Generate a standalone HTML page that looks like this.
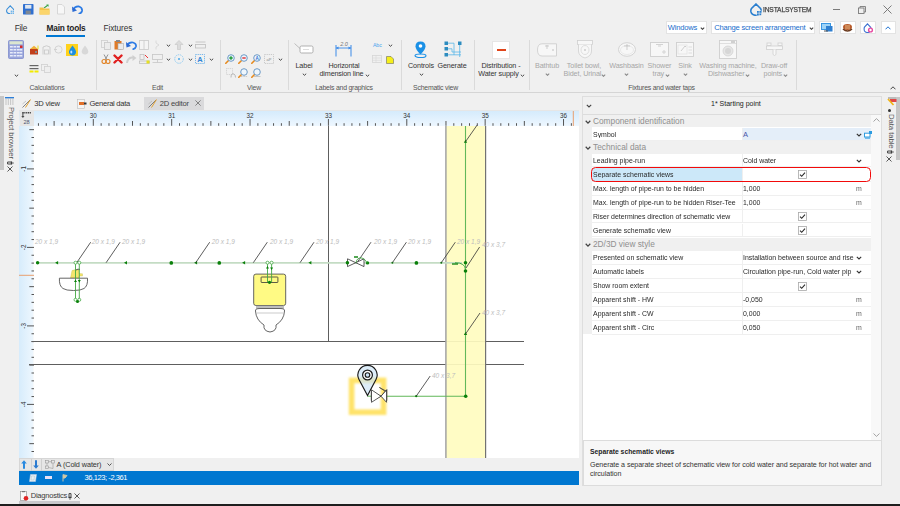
<!DOCTYPE html>
<html><head><meta charset="utf-8">
<style>
*{margin:0;padding:0;box-sizing:border-box}
html,body{width:900px;height:506px;overflow:hidden;background:#f0f0f0;font-family:"Liberation Sans",sans-serif;color:#222}
.a{position:absolute}
.t{position:absolute;white-space:nowrap;line-height:1;font-family:"Liberation Sans",sans-serif}
.grp{position:absolute;font-size:6.3px;color:#444;white-space:nowrap;line-height:1}
.sep{position:absolute;width:1px;background:#d9d9d9;top:40px;height:50px}
.dis{color:#a3a3a3}
</style></head><body>

<!-- ===== Title bar / QAT ===== -->
<div class="a" style="left:0;top:0;width:900px;height:92px;background:#f0f0f0"></div>

<!-- tabs -->
<div class="t" style="left:14.8px;top:24.1px;font-size:8.3px;color:#333;letter-spacing:-0.3px">File</div>
<div class="t" style="left:46.5px;top:24.1px;font-size:8.3px;font-weight:bold;color:#222;letter-spacing:-0.2px">Main tools</div>
<div class="a" style="left:46px;top:35px;width:39px;height:1.6px;background:#0078d4"></div>
<div class="t" style="left:103.5px;top:24.1px;font-size:8.3px;color:#333;letter-spacing:-0.1px">Fixtures</div>


<!-- QAT icons -->
<svg class="a" style="left:5.5px;top:4.8px" width="8.5" height="9.5" viewBox="0 0 10 11"><path d="M5 0.8 L8.6 4.6 Q9.5 6 9.3 7.6 Q8.5 10.2 5 10.2 Q1.5 10.2 0.8 7.6 Q0.5 6 1.4 4.6 Z" fill="none" stroke="#3b8fd9" stroke-width="1.3"/><rect x="5" y="6" width="5" height="5" fill="#f0f0f0"/><rect x="5.5" y="6.5" width="1.8" height="1.8" fill="#6fb4ea"/><rect x="7.8" y="6.5" width="1.8" height="1.8" fill="#6fb4ea"/><rect x="5.5" y="8.8" width="1.8" height="1.8" fill="#6fb4ea"/><rect x="7.8" y="8.8" width="1.8" height="1.8" fill="#6fb4ea"/></svg>
<svg class="a" style="left:23px;top:4px" width="10.5" height="10.5" viewBox="0 0 10 10"><rect x="0" y="0" width="10" height="10" rx="0.8" fill="#2f6fd0"/><rect x="2" y="0.8" width="6" height="3.6" fill="#dfe6ef"/><rect x="2.5" y="6.2" width="5" height="3.4" fill="#7d8794"/></svg>
<svg class="a" style="left:39px;top:3.5px" width="11" height="11" viewBox="0 0 11 11"><path d="M0.5 3.5 L4 3.5 L5 4.5 L10.5 4.5 L10.5 10.5 L0.5 10.5 Z" fill="#f3c24a"/><path d="M1 6 L10.5 6 L10.5 10.5 L0.5 10.5 Z" fill="#fbd56c"/><path d="M4.5 3.8 L8 1 L7 0.5 L9.6 0.4 L9.5 3 L8.8 2 L5.6 4.3 Z" fill="#3aa546"/></svg>
<svg class="a" style="left:56.5px;top:4px" width="8" height="10.5" viewBox="0 0 8 10.5"><path d="M0.5 0.5 L5 0.5 L7.5 3 L7.5 10 L0.5 10 Z" fill="#f7f7f7" stroke="#d4d4d4" stroke-width="0.9"/></svg>
<svg class="a" style="left:72px;top:4.5px" width="11" height="9.5" viewBox="0 0 11 9.5"><path d="M1 5 Q3 1 7 1.5 Q10.5 2.5 10 6 Q9.3 8.5 6.5 8.8" fill="none" stroke="#2c7be5" stroke-width="1.8"/><path d="M0 1.5 L0.5 7 L5 5.5 Z" fill="#2c6ad2"/></svg>

<!-- logo -->
<svg class="a" style="left:750px;top:3px" width="12" height="13" viewBox="0 0 12 13"><path d="M6 1 L10.5 5.5 Q11.5 7 11 9 Q10 12.3 6 12.3 Q2 12.3 1 9 Q0.5 7 1.5 5.5 Z" fill="none" stroke="#2a7fcf" stroke-width="1.6"/><rect x="6.5" y="7.5" width="5" height="5" fill="#f0f0f0"/><rect x="7" y="8" width="1.8" height="1.8" fill="#2a7fcf"/><rect x="9.4" y="8" width="1.8" height="1.8" fill="#2a7fcf"/><rect x="7" y="10.4" width="1.8" height="1.8" fill="#2a7fcf"/><rect x="9.4" y="10.4" width="1.8" height="1.8" fill="#2a7fcf"/></svg>
<div class="t" style="left:763.3px;top:5.9px;font-size:7.2px;color:#444;letter-spacing:-0.15px;-webkit-text-stroke:0.25px #444;transform:scaleX(0.925);transform-origin:0 0">INSTALSYSTEM</div>
<!-- window controls -->
<div class="a" style="left:833px;top:9px;width:7px;height:1px;background:#7a7a7a"></div>
<svg class="a" style="left:858px;top:6px" width="8" height="8" viewBox="0 0 8 8"><rect x="0.5" y="2" width="5.5" height="5.5" fill="none" stroke="#7a7a7a" stroke-width="0.9"/><path d="M2 2 L2 0.5 L7.5 0.5 L7.5 6 L6 6" fill="none" stroke="#7a7a7a" stroke-width="0.9"/></svg>
<svg class="a" style="left:883px;top:5px" width="9" height="9" viewBox="0 0 9 9"><path d="M0.5 0.5 L8.5 8.5 M8.5 0.5 L0.5 8.5" stroke="#6e6e6e" stroke-width="0.9"/></svg>

<!-- Windows / change screen -->
<div class="a" style="left:665.5px;top:21px;width:41.5px;height:13px;background:#fff;border:1px solid #e3e3e3"></div>
<div class="t" style="left:667.8px;top:24px;font-size:7.6px;color:#1a6dcc;letter-spacing:-0.2px">Windows</div>
<svg class="a" style="left:700px;top:26.8px" width="5" height="3" viewBox="0 0 5 3"><path d="M0.8 0.6 L2.5 2.3 L4.2 0.6" fill="none" stroke="#444" stroke-width="1.1"/></svg>
<div class="a" style="left:711px;top:21px;width:104px;height:13px;background:#fff;border:1px solid #e3e3e3"></div>
<div class="t" style="left:714.3px;top:24px;font-size:7.6px;color:#1a6dcc;letter-spacing:-0.22px">Change screen arrangement</div>
<svg class="a" style="left:808.5px;top:26.8px" width="5" height="3" viewBox="0 0 5 3"><path d="M0.8 0.6 L2.5 2.3 L4.2 0.6" fill="none" stroke="#444" stroke-width="1.1"/></svg>
<!-- icon buttons -->
<div class="a" style="left:819px;top:21px;width:16px;height:13px;background:#fff;border:1px solid #e3e3e3"></div>
<svg class="a" style="left:821px;top:23px" width="12" height="9" viewBox="0 0 12 9"><rect x="0.5" y="0.5" width="9" height="6" fill="#9fd4f7" stroke="#2b8fe0" stroke-width="0.9"/><rect x="5" y="3" width="6.5" height="5.5" fill="#2f7fd0"/><rect x="3" y="7.5" width="4" height="1" fill="#555"/></svg>
<div class="a" style="left:839.5px;top:21px;width:16px;height:13px;background:#fff;border:1px solid #e3e3e3"></div>
<svg class="a" style="left:842px;top:22.5px" width="11" height="10" viewBox="0 0 11 10"><ellipse cx="5.5" cy="4" rx="4.5" ry="3" fill="#b85a2a"/><path d="M1 6 Q5.5 10 10 6" fill="none" stroke="#6b3a1e" stroke-width="1.6"/><path d="M3 3 L8 3 M3 5 L8 5" stroke="#f3d2a0" stroke-width="0.8"/></svg>
<div class="a" style="left:860px;top:21px;width:15.5px;height:13px;background:#fff;border:1px solid #e3e3e3"></div>
<svg class="a" style="left:862.5px;top:22.5px" width="11" height="10" viewBox="0 0 11 10"><path d="M4.5 0.8 L7.5 4 Q8.5 6 7.5 8 Q6.5 9.5 4.5 9.5 Q2.5 9.5 1.5 8 Q0.7 6 1.5 4 Z" fill="none" stroke="#3b6fd0" stroke-width="1.1"/><circle cx="7.5" cy="7" r="2.6" fill="#e64aa0"/><circle cx="7.5" cy="7" r="1.2" fill="#fff"/></svg>
<div class="a" style="left:880.5px;top:21px;width:15px;height:13px;background:#fff;border:1px solid #e3e3e3"></div>
<svg class="a" style="left:885px;top:25.5px" width="6" height="4" viewBox="0 0 6 4"><path d="M0.5 3.3 L3 0.8 L5.5 3.3" fill="none" stroke="#1a6fd0" stroke-width="1"/></svg>

<!-- RIBBON START -->
<div class="t" style="left:-13px;width:120px;text-align:center;top:84.5px;font-size:6.9px;color:#555;letter-spacing:-0.22px">Calculations</div>
<div class="t" style="left:97.5px;width:120px;text-align:center;top:84.5px;font-size:6.9px;color:#555;letter-spacing:-0.22px">Edit</div>
<div class="t" style="left:194px;width:120px;text-align:center;top:84.5px;font-size:6.9px;color:#555;letter-spacing:-0.22px">View</div>
<div class="t" style="left:284px;width:120px;text-align:center;top:84.5px;font-size:6.9px;color:#555;letter-spacing:-0.22px">Labels and graphics</div>
<div class="t" style="left:375.5px;width:120px;text-align:center;top:84.5px;font-size:6.9px;color:#555;letter-spacing:-0.22px">Schematic view</div>
<div class="t" style="left:601.5px;width:120px;text-align:center;top:84.5px;font-size:6.9px;color:#555;letter-spacing:-0.22px">Fixtures and water taps</div>
<div class="a" style="left:95.5px;top:40px;width:1px;height:50px;background:#dadada"></div>
<div class="a" style="left:219.5px;top:40px;width:1px;height:50px;background:#dadada"></div>
<div class="a" style="left:288px;top:40px;width:1px;height:50px;background:#dadada"></div>
<div class="a" style="left:400.5px;top:40px;width:1px;height:50px;background:#dadada"></div>
<div class="a" style="left:473.5px;top:40px;width:1px;height:50px;background:#dadada"></div>
<div class="a" style="left:528.5px;top:40px;width:1px;height:50px;background:#dadada"></div>
<div class="a" style="left:795.5px;top:40px;width:1px;height:50px;background:#dadada"></div>
<svg class="a" style="left:890px;top:86px" width="6" height="4" viewBox="0 0 6 4"><path d="M0.5 3.3 L3 0.8 L5.5 3.3" fill="none" stroke="#444" stroke-width="1"/></svg>
<svg class="a" style="left:8px;top:40px" width="16" height="19" viewBox="0 0 16 19"><rect x="0.5" y="0.5" width="15" height="18" rx="1" fill="#9aa6dc" stroke="#7d8acb" stroke-width="0.8"/><rect x="1.5" y="1.3" width="13" height="3" fill="#dbe6cf"/><g fill="#e8ecfa"><rect x="2" y="6" width="2.8" height="1.5"/><rect x="5.5" y="6" width="2.8" height="1.5"/><rect x="2" y="9" width="2.8" height="1.5"/><rect x="5.5" y="9" width="2.8" height="1.5"/><rect x="9" y="9" width="2.8" height="1.5"/><rect x="12" y="9" width="2.3" height="1.5"/><rect x="2" y="12" width="2.8" height="1.5"/><rect x="5.5" y="12" width="2.8" height="1.5"/><rect x="9" y="12" width="2.8" height="1.5"/><rect x="12" y="12" width="2.3" height="1.5"/><rect x="2" y="15" width="2.8" height="1.5"/><rect x="5.5" y="15" width="2.8" height="1.5"/><rect x="9" y="15" width="2.8" height="1.5"/><rect x="12" y="15" width="2.3" height="1.5"/><rect x="9" y="6" width="2.8" height="1.5"/></g><rect x="12" y="5.5" width="2.5" height="2.5" fill="#d42a2a"/></svg>
<svg class="a" style="left:14px;top:73.5px" width="5" height="3" viewBox="0 0 5 3"><path d="M0.8 0.7 L2.5 2.3 L4.2 0.7" fill="none" stroke="#444" stroke-width="1"/></svg>
<svg class="a" style="left:29px;top:45px" width="10" height="10" viewBox="0 0 10 10"><path d="M1 4 L5 0.8 L9 4 Z" fill="#f0b23a"/><rect x="1" y="4" width="8" height="5.5" fill="#c2401c"/><rect x="6" y="6" width="2" height="2" fill="#888"/><rect x="8.5" y="0.5" width="1" height="4" fill="#e6e020"/></svg>
<svg class="a" style="left:42px;top:45px" width="9" height="10" viewBox="0 0 9 10"><path d="M1 9.5 L1 2 Q4.5 -0.5 8 2 L8 9.5" fill="none" stroke="#c8c8c8" stroke-width="0.9"/><rect x="2.5" y="5" width="4" height="4" fill="none" stroke="#c8c8c8" stroke-width="0.8"/></svg>
<svg class="a" style="left:54px;top:45px" width="9" height="9" viewBox="0 0 9 9"><circle cx="4.5" cy="4.5" r="3.6" fill="none" stroke="#cfcfcf" stroke-width="0.9"/><path d="M0 4.5 L3 4.5" stroke="#cfcfcf" stroke-width="0.9"/></svg>
<div class="a" style="left:66px;top:43.5px;width:12px;height:12.5px;background:#ffd21c"></div><svg class="a" style="left:67.5px;top:44.5px" width="9" height="11" viewBox="0 0 9 11"><path d="M4.5 0.5 Q8.5 5.5 8 7.5 Q7.5 10.5 4.5 10.5 Q1.5 10.5 1 7.5 Q0.5 5.5 4.5 0.5 Z" fill="#1e8fe0"/><ellipse cx="3.3" cy="7" rx="1" ry="1.6" fill="#bfe3ff"/></svg>
<svg class="a" style="left:81px;top:45px" width="8" height="10" viewBox="0 0 8 10"><path d="M4 0.5 Q7.5 5 7.3 6.8 Q7 9.5 4 9.5 Q1 9.5 0.7 6.8 Q0.5 5 4 0.5 Z" fill="#d8d8d8"/></svg>
<svg class="a" style="left:29px;top:64px" width="10" height="9" viewBox="0 0 10 9"><rect x="0.5" y="1" width="9" height="1.2" fill="#666"/><rect x="0.5" y="4" width="9" height="1.2" fill="#666"/><rect x="0.5" y="6.5" width="4" height="2" fill="#f2ea00"/><rect x="5.5" y="6.5" width="4" height="2" fill="#f2ea00"/></svg>
<svg class="a" style="left:41px;top:64px" width="10" height="9" viewBox="0 0 10 9"><rect x="0.5" y="0.5" width="6" height="6" fill="none" stroke="#d0d0d0" stroke-width="0.8"/><rect x="3.5" y="2.5" width="6" height="6" fill="#eee" stroke="#d0d0d0" stroke-width="0.8"/></svg>
<svg class="a" style="left:101px;top:40px" width="10" height="10" viewBox="0 0 10 10"><rect x="0.5" y="0.5" width="6" height="7" fill="none" stroke="#cfcfcf" stroke-width="0.8"/><rect x="3.5" y="2.5" width="6" height="7" fill="#ececec" stroke="#c8c8c8" stroke-width="0.8"/></svg>
<svg class="a" style="left:114px;top:40px" width="10" height="10" viewBox="0 0 10 10"><rect x="0.5" y="1" width="7" height="8.5" fill="#e07b28"/><rect x="2" y="0" width="4" height="2" fill="#888"/><rect x="4" y="3.5" width="5.5" height="6" fill="#ececec" stroke="#aaa" stroke-width="0.6"/></svg>
<svg class="a" style="left:126px;top:40.5px" width="11" height="9" viewBox="0 0 11 9"><path d="M1 4.5 Q3 1 7 1.5 Q10.5 2.5 10 5.5 Q9.3 8 6.5 8.3" fill="none" stroke="#2c7be5" stroke-width="1.7"/><path d="M0 1 L0.5 6.5 L5 5 Z" fill="#2c6ad2"/></svg>
<svg class="a" style="left:139px;top:40px" width="10" height="10" viewBox="0 0 10 10"><rect x="0.5" y="0.5" width="9" height="9" fill="#f4f4f4" stroke="#c9c9c9" stroke-width="0.8"/><path d="M5 0.5 L5 9.5" stroke="#c9c9c9" stroke-width="0.8"/></svg>
<svg class="a" style="left:155px;top:40px" width="5" height="10" viewBox="0 0 5 10"><path d="M1 0.5 L1 3 L4 5 L1 7 L1 9.5" fill="none" stroke="#d4d4d4" stroke-width="0.8"/></svg>
<svg class="a" style="left:165.5px;top:44.3px" width="5" height="3" viewBox="0 0 5 3"><path d="M0.8 0.7 L2.5 2.3 L4.2 0.7" fill="none" stroke="#444" stroke-width="1"/></svg>
<svg class="a" style="left:174px;top:40px" width="10" height="10" viewBox="0 0 10 10"><path d="M5 0.5 L9 4.5 L6.5 4.5 L6.5 9.5 L3.5 9.5 L3.5 4.5 L1 4.5 Z" fill="#dcdcdc" stroke="#c4c4c4" stroke-width="0.6"/></svg>
<svg class="a" style="left:187.5px;top:44.3px" width="5" height="3" viewBox="0 0 5 3"><path d="M0.8 0.7 L2.5 2.3 L4.2 0.7" fill="none" stroke="#444" stroke-width="1"/></svg>
<svg class="a" style="left:195px;top:41px" width="11" height="8" viewBox="0 0 11 8"><path d="M0.5 1 L10.5 1" stroke="#bdbdbd" stroke-width="0.8"/><rect x="0.5" y="3.5" width="10" height="3.5" fill="none" stroke="#bdbdbd" stroke-width="0.8"/></svg>
<svg class="a" style="left:101px;top:54px" width="10" height="10" viewBox="0 0 10 10"><path d="M3 0.5 L6 6 M7 0.5 L4 6" stroke="#888" stroke-width="0.9"/><circle cx="3" cy="7.5" r="2" fill="none" stroke="#e2862a" stroke-width="1.2"/><circle cx="7" cy="7.5" r="2" fill="none" stroke="#e2862a" stroke-width="1.2"/></svg>
<svg class="a" style="left:113px;top:54px" width="10" height="10" viewBox="0 0 10 10"><path d="M1.5 1.5 L8.5 8.5 M8.5 1.5 L1.5 8.5" stroke="#e02020" stroke-width="2.4" stroke-linecap="round"/></svg>
<svg class="a" style="left:126px;top:55px" width="11" height="9" viewBox="0 0 11 9"><path d="M1 8 Q1.5 3 6 2.5 L7 2.5" fill="none" stroke="#cfcfcf" stroke-width="2"/><path d="M6.5 0 L10.5 3 L6.5 6 Z" fill="#cfcfcf"/></svg>
<svg class="a" style="left:139px;top:54px" width="11" height="10" viewBox="0 0 11 10"><rect x="1" y="0.5" width="4" height="5" fill="none" stroke="#bbb" stroke-width="0.7"/><path d="M6 1 L9 4" stroke="#e33" stroke-width="1"/><rect x="0.5" y="7" width="10" height="2.5" fill="none" stroke="#bbb" stroke-width="0.7"/><rect x="7.5" y="6.5" width="3" height="3" fill="#e6e020"/></svg>
<svg class="a" style="left:152px;top:54px" width="11" height="10" viewBox="0 0 11 10"><rect x="0.5" y="0.5" width="10" height="5" fill="none" stroke="#c6c6c6" stroke-width="0.8"/><path d="M5.5 5.5 L5.5 8.5 M0.5 8.5 L10.5 8.5" stroke="#c6c6c6" stroke-width="0.8"/></svg>
<svg class="a" style="left:165.5px;top:57.8px" width="5" height="3" viewBox="0 0 5 3"><path d="M0.8 0.7 L2.5 2.3 L4.2 0.7" fill="none" stroke="#444" stroke-width="1"/></svg>
<svg class="a" style="left:174px;top:54px" width="10" height="10" viewBox="0 0 10 10"><circle cx="5" cy="5" r="4.3" fill="none" stroke="#8ccaf2" stroke-width="0.9" stroke-dasharray="1.5 0.8"/><circle cx="5" cy="5" r="1" fill="#4aa8e8"/></svg>
<svg class="a" style="left:187.5px;top:57.8px" width="5" height="3" viewBox="0 0 5 3"><path d="M0.8 0.7 L2.5 2.3 L4.2 0.7" fill="none" stroke="#444" stroke-width="1"/></svg>
<svg class="a" style="left:195px;top:54px" width="10" height="10" viewBox="0 0 10 10"><rect x="0.5" y="0.5" width="9" height="9" fill="none" stroke="#57a7e8" stroke-width="0.8" stroke-dasharray="1.2 0.9"/><text x="5" y="8" font-size="7.5" font-family="Liberation Sans" font-weight="bold" fill="#2f86d8" text-anchor="middle">A</text></svg>
<svg class="a" style="left:208.5px;top:57.8px" width="5" height="3" viewBox="0 0 5 3"><path d="M0.8 0.7 L2.5 2.3 L4.2 0.7" fill="none" stroke="#444" stroke-width="1"/></svg>
<svg class="a" style="left:225px;top:54px" width="10" height="10" viewBox="0 0 10 10"><path d="M0.8 9.2 L3.3 6.7" stroke="#e68a1e" stroke-width="1.6" stroke-linecap="round"/><circle cx="6" cy="4" r="3.3" fill="#eef6fd" stroke="#5d8fc0" stroke-width="0.9"/><path d="M4.3 4 L7.7 4 M6 2.3 L6 5.7" stroke="#1e9a3a" stroke-width="1.4"/></svg>
<svg class="a" style="left:238px;top:54px" width="10" height="10" viewBox="0 0 10 10"><path d="M0.8 9.2 L3.3 6.7" stroke="#e68a1e" stroke-width="1.6" stroke-linecap="round"/><circle cx="6" cy="4" r="3.3" fill="#eef6fd" stroke="#5d8fc0" stroke-width="0.9"/><path d="M4.3 4 L7.7 4" stroke="#e03030" stroke-width="1.4"/></svg>
<svg class="a" style="left:251px;top:54px" width="10" height="10" viewBox="0 0 10 10"><path d="M0.8 9.2 L3.3 6.7" stroke="#e68a1e" stroke-width="1.6" stroke-linecap="round"/><circle cx="6" cy="4" r="3.3" fill="#eef6fd" stroke="#5d8fc0" stroke-width="0.9"/><text x="6" y="5.6" font-size="4.5" font-family="Liberation Sans" font-weight="bold" fill="#2f6fd0" text-anchor="middle">A</text></svg>
<svg class="a" style="left:264px;top:54px" width="10" height="10" viewBox="0 0 10 10"><rect x="0.5" y="0.5" width="9" height="9" fill="none" stroke="#b8b8b8" stroke-width="0.7" stroke-dasharray="1.2 0.9"/><text x="5" y="6.5" font-size="4" font-family="Liberation Sans" fill="#888" text-anchor="middle">aP</text></svg>
<svg class="a" style="left:277.5px;top:57.8px" width="5" height="3" viewBox="0 0 5 3"><path d="M0.8 0.7 L2.5 2.3 L4.2 0.7" fill="none" stroke="#444" stroke-width="1"/></svg>
<svg class="a" style="left:226px;top:68px" width="10" height="10" viewBox="0 0 10 10"><rect x="0.5" y="0.5" width="6" height="6" fill="none" stroke="#c4c4c4" stroke-width="0.7" stroke-dasharray="1 0.8"/><path d="M5 9.5 Q5 5 8 6 Q9.5 7 9.5 9.5" fill="none" stroke="#aaa" stroke-width="0.8"/></svg>
<svg class="a" style="left:238px;top:68px" width="10" height="10" viewBox="0 0 10 10"><path d="M0.8 9.2 L3.3 6.7" stroke="#e68a1e" stroke-width="1.6" stroke-linecap="round"/><circle cx="6" cy="4" r="3.3" fill="#eef6fd" stroke="#5d8fc0" stroke-width="0.9"/><path d="M3 8.5 L9.5 8.5" stroke="#aaa" stroke-width="0.6" stroke-dasharray="1 0.6"/></svg>
<svg class="a" style="left:251px;top:68px" width="10" height="10" viewBox="0 0 10 10"><path d="M0.8 9.2 L3.3 6.7" stroke="#e68a1e" stroke-width="1.6" stroke-linecap="round"/><circle cx="6" cy="4" r="3.3" fill="#eef6fd" stroke="#5d8fc0" stroke-width="0.9"/><path d="M3 8.5 L9.5 8.5" stroke="#aaa" stroke-width="0.6"/></svg>
<svg class="a" style="left:294px;top:43px" width="20" height="11" viewBox="0 0 20 11"><path d="M0.5 0.5 L6 5.5" stroke="#b0b0b0" stroke-width="0.8"/><rect x="6" y="3" width="13" height="7" rx="1.5" fill="#fff" stroke="#a8a8a8" stroke-width="0.9"/><path d="M9.5 6.5 L15.5 6.5" stroke="#aaa" stroke-width="0.8" stroke-dasharray="1 1"/></svg>
<div class="t" style="left:244px;width:120px;text-align:center;top:62.4px;font-size:7.2px;color:#333;letter-spacing:-0.1px">Label</div>
<svg class="a" style="left:301.5px;top:73px" width="5" height="3" viewBox="0 0 5 3"><path d="M0.8 0.7 L2.5 2.3 L4.2 0.7" fill="none" stroke="#444" stroke-width="1"/></svg>
<svg class="a" style="left:335px;top:41px" width="17" height="16" viewBox="0 0 17 16"><text x="9" y="5.3" font-size="5.5" font-style="italic" font-family="Liberation Sans" fill="#777" text-anchor="middle">2.0</text><path d="M1 4 L1 15.5 M16 4 L16 15.5" stroke="#3b8ae8" stroke-width="1"/><path d="M1 7 L16 7" stroke="#3b8ae8" stroke-width="0.9"/><path d="M1 7 L3.5 5.5 L3.5 8.5 Z M16 7 L13.5 5.5 L13.5 8.5 Z" fill="#3b8ae8"/></svg>
<div class="t" style="left:284px;width:120px;text-align:center;top:62.4px;font-size:7.2px;color:#333;letter-spacing:-0.15px">Horizontal</div>
<div class="t" style="left:319.5px;top:70.4px;font-size:7.2px;color:#333;letter-spacing:-0.15px">dimension line</div>
<svg class="a" style="left:364.5px;top:73.8px" width="5" height="3" viewBox="0 0 5 3"><path d="M0.8 0.7 L2.5 2.3 L4.2 0.7" fill="none" stroke="#444" stroke-width="1"/></svg>
<div class="t" style="left:373px;top:42.8px;font-size:5.2px;color:#4aa3ee;letter-spacing:-0.1px">Abc</div>
<svg class="a" style="left:387.5px;top:44.3px" width="5" height="3" viewBox="0 0 5 3"><path d="M0.8 0.7 L2.5 2.3 L4.2 0.7" fill="none" stroke="#444" stroke-width="1"/></svg>
<svg class="a" style="left:372px;top:55px" width="10" height="8" viewBox="0 0 10 8"><rect x="0.5" y="0.5" width="9" height="7" fill="none" stroke="#d6d6d6" stroke-width="0.8"/><path d="M0.5 3 L9.5 3 M0.5 5.3 L9.5 5.3 M4 0.5 L4 7.5" stroke="#d6d6d6" stroke-width="0.6"/></svg>
<svg class="a" style="left:386px;top:55.5px" width="8" height="8" viewBox="0 0 8 8"><path d="M0.5 0.5 L5 0.5 L7.5 3 L7.5 7.5 L0.5 7.5 Z" fill="#f5ee1a" stroke="#555" stroke-width="0.5"/></svg>
<svg class="a" style="left:413.5px;top:41px" width="13" height="17" viewBox="0 0 13 17"><path d="M6.5 0.5 Q11.5 0.5 11.5 5.3 Q11.5 8.5 6.5 13.5 Q1.5 8.5 1.5 5.3 Q1.5 0.5 6.5 0.5 Z" fill="#1a90e6"/><circle cx="6.5" cy="5" r="1.8" fill="#fff"/><ellipse cx="6.5" cy="14.8" rx="5.5" ry="1.8" fill="none" stroke="#1a90e6" stroke-width="1.1"/></svg>
<div class="t" style="left:361px;width:120px;text-align:center;top:62.4px;font-size:7.2px;color:#333;letter-spacing:-0.1px">Controls</div>
<svg class="a" style="left:418.5px;top:73px" width="5" height="3" viewBox="0 0 5 3"><path d="M0.8 0.7 L2.5 2.3 L4.2 0.7" fill="none" stroke="#444" stroke-width="1"/></svg>
<svg class="a" style="left:443.5px;top:41px" width="18" height="17" viewBox="0 0 18 17"><rect x="0.5" y="0.5" width="3.5" height="3.5" fill="#2d8cbf"/><rect x="0.5" y="6" width="3.5" height="3.5" fill="#2d8cbf"/><rect x="0.5" y="12" width="3.5" height="3.5" fill="#2d8cbf"/><rect x="14" y="0.5" width="3.5" height="3.5" fill="#2d8cbf"/><path d="M4 2.2 L10 2.2 L10 14 M4 7.8 L8 7.8 L8 11 L17 11 M4 13.8 L17 13.8 M15.7 4 L15.7 16" fill="none" stroke="#5ab8e8" stroke-width="0.8"/></svg>
<div class="t" style="left:392px;width:120px;text-align:center;top:62.4px;font-size:7.2px;color:#333;letter-spacing:-0.1px">Generate</div>
<div class="a" style="left:492px;top:41px;width:17.5px;height:17.5px;background:#fff;border:0.5px solid #e6e6e6"></div>
<div class="a" style="left:496.5px;top:49px;width:9px;height:1.6px;background:#e0451a"></div>
<div class="t" style="left:441px;width:120px;text-align:center;top:62.4px;font-size:7.2px;color:#333;letter-spacing:-0.1px">Distribution -</div>
<div class="t" style="left:438.5px;width:120px;text-align:center;top:70.4px;font-size:7.2px;color:#333;letter-spacing:-0.1px">Water supply</div>
<svg class="a" style="left:520px;top:73.8px" width="5" height="3" viewBox="0 0 5 3"><path d="M0.8 0.7 L2.5 2.3 L4.2 0.7" fill="none" stroke="#444" stroke-width="1"/></svg>
<svg class="a" style="left:536.5px;top:43px" width="21" height="14" viewBox="0 0 21 14"><path d="M5 0.8 L19.5 0.8 L19.5 13 L5 13 Q0.5 13 0.5 7 Q0.5 0.8 5 0.8 Z" fill="#f7f7f7" stroke="#cfcfcf" stroke-width="0.9"/><path d="M10 2 L10 6 M8 3 L12 3" stroke="#bbb" stroke-width="0.7"/><circle cx="16" cy="7" r="0.8" fill="#bbb"/></svg>
<div class="t" style="left:487px;width:120px;text-align:center;top:62.4px;font-size:7.2px;color:#a6a6a6;letter-spacing:-0.1px">Bathtub</div>
<svg class="a" style="left:544.5px;top:73px" width="5" height="3" viewBox="0 0 5 3"><path d="M0.8 0.6 L2.5 2.3 L4.2 0.6" fill="none" stroke="#8a8a8a" stroke-width="1.1"/></svg>
<svg class="a" style="left:576.5px;top:40px" width="16" height="19" viewBox="0 0 16 19"><rect x="0.5" y="0.5" width="15" height="4" fill="#f7f7f7" stroke="#cfcfcf" stroke-width="0.8"/><path d="M1.5 4.5 L1.5 11 Q1.5 16 8 18 Q14.5 16 14.5 11 L14.5 4.5" fill="#f7f7f7" stroke="#cfcfcf" stroke-width="0.8"/><ellipse cx="8" cy="10" rx="4" ry="4.5" fill="none" stroke="#d4d4d4" stroke-width="0.7"/><circle cx="8" cy="10" r="1" fill="#ccc"/></svg>
<div class="t" style="left:524px;width:120px;text-align:center;top:62.4px;font-size:7.2px;color:#a6a6a6;letter-spacing:-0.1px">Toilet bowl,</div>
<div class="t" style="left:563.5px;top:70.4px;font-size:7.2px;color:#a6a6a6;letter-spacing:-0.1px">Bidet, Urinal</div>
<svg class="a" style="left:601px;top:73.8px" width="5" height="3" viewBox="0 0 5 3"><path d="M0.8 0.6 L2.5 2.3 L4.2 0.6" fill="none" stroke="#8a8a8a" stroke-width="1.1"/></svg>
<svg class="a" style="left:618px;top:42px" width="18" height="15" viewBox="0 0 18 15"><ellipse cx="9" cy="7.5" rx="8.5" ry="6.8" fill="#f7f7f7" stroke="#cfcfcf" stroke-width="0.9"/><ellipse cx="9" cy="8" rx="6.5" ry="4.5" fill="none" stroke="#ddd" stroke-width="0.6"/><path d="M9 2 L9 8 M6 4 L12 4" stroke="#bbb" stroke-width="0.7"/></svg>
<div class="t" style="left:566.5px;width:120px;text-align:center;top:62.4px;font-size:7.2px;color:#a6a6a6;letter-spacing:-0.1px">Washbasin</div>
<svg class="a" style="left:624px;top:73px" width="5" height="3" viewBox="0 0 5 3"><path d="M0.8 0.6 L2.5 2.3 L4.2 0.6" fill="none" stroke="#8a8a8a" stroke-width="1.1"/></svg>
<svg class="a" style="left:650px;top:42px" width="19" height="15" viewBox="0 0 19 15"><rect x="0.5" y="0.5" width="18" height="14" fill="#f7f7f7" stroke="#cfcfcf" stroke-width="0.9"/><path d="M6 2.5 L13 2.5 M8 4 L11 4" stroke="#bbb" stroke-width="0.6"/><circle cx="14" cy="10" r="1.2" fill="none" stroke="#bbb" stroke-width="0.6"/></svg>
<div class="t" style="left:599.5px;width:120px;text-align:center;top:62.4px;font-size:7.2px;color:#a6a6a6;letter-spacing:-0.1px">Shower</div>
<div class="t" style="left:652.5px;top:70.4px;font-size:7.2px;color:#a6a6a6;letter-spacing:-0.1px">tray</div>
<svg class="a" style="left:665px;top:73.8px" width="5" height="3" viewBox="0 0 5 3"><path d="M0.8 0.6 L2.5 2.3 L4.2 0.6" fill="none" stroke="#8a8a8a" stroke-width="1.1"/></svg>
<svg class="a" style="left:676px;top:42px" width="18" height="15" viewBox="0 0 18 15"><rect x="0.5" y="0.5" width="17" height="14" fill="#f7f7f7" stroke="#cfcfcf" stroke-width="0.9"/><rect x="2" y="3" width="9" height="9" fill="none" stroke="#ddd" stroke-width="0.6"/><path d="M5 9 L9 4 L10 5" stroke="#bbb" stroke-width="0.7" fill="none"/><path d="M12.5 5 L16 5 M12.5 8 L16 8 M12.5 11 L16 11" stroke="#ccc" stroke-width="0.6"/></svg>
<div class="t" style="left:625px;width:120px;text-align:center;top:62.4px;font-size:7.2px;color:#a6a6a6;letter-spacing:-0.1px">Sink</div>
<svg class="a" style="left:682.5px;top:73px" width="5" height="3" viewBox="0 0 5 3"><path d="M0.8 0.6 L2.5 2.3 L4.2 0.6" fill="none" stroke="#8a8a8a" stroke-width="1.1"/></svg>
<svg class="a" style="left:719px;top:40px" width="18" height="19" viewBox="0 0 18 19"><rect x="0.5" y="0.5" width="17" height="18" fill="#f7f7f7" stroke="#cfcfcf" stroke-width="0.9"/><path d="M0.5 3.5 L17.5 3.5" stroke="#cfcfcf" stroke-width="0.6"/><circle cx="9" cy="11" r="5" fill="#e6e6e6" stroke="#cfcfcf" stroke-width="0.7"/><circle cx="9" cy="11" r="3" fill="#d6d6d6"/><rect x="12" y="1.5" width="4" height="1" fill="#aaa"/></svg>
<div class="t" style="left:668px;width:120px;text-align:center;top:62.4px;font-size:7.2px;color:#a6a6a6;letter-spacing:-0.1px">Washing machine,</div>
<div class="t" style="left:708px;top:70.4px;font-size:7.2px;color:#a6a6a6;letter-spacing:-0.1px">Dishwasher</div>
<svg class="a" style="left:745px;top:73.8px" width="5" height="3" viewBox="0 0 5 3"><path d="M0.8 0.6 L2.5 2.3 L4.2 0.6" fill="none" stroke="#8a8a8a" stroke-width="1.1"/></svg>
<svg class="a" style="left:766px;top:42px" width="17" height="15" viewBox="0 0 17 15"><rect x="1" y="1" width="4" height="2.5" fill="#f7f7f7" stroke="#cfcfcf" stroke-width="0.8"/><rect x="12" y="1" width="4" height="2.5" fill="#f7f7f7" stroke="#cfcfcf" stroke-width="0.8"/><rect x="0.5" y="4" width="16" height="3.5" fill="#f7f7f7" stroke="#cfcfcf" stroke-width="0.8"/><path d="M7 7.5 L7 12.5 Q8.5 14.5 10 12.5 L10 7.5" fill="#f7f7f7" stroke="#cfcfcf" stroke-width="0.8"/></svg>
<div class="t" style="left:714px;width:120px;text-align:center;top:62.4px;font-size:7.2px;color:#a6a6a6;letter-spacing:-0.1px">Draw-off</div>
<div class="t" style="left:763.5px;top:70.4px;font-size:7.2px;color:#a6a6a6;letter-spacing:-0.1px">points</div>
<svg class="a" style="left:783px;top:73.8px" width="5" height="3" viewBox="0 0 5 3"><path d="M0.8 0.6 L2.5 2.3 L4.2 0.6" fill="none" stroke="#8a8a8a" stroke-width="1.1"/></svg>
<!-- RIBBON END -->
<!-- ribbon bottom line -->
<div class="a" style="left:0;top:92px;width:900px;height:1px;background:#d5d5d5"></div>

<!-- ===== Work area ===== -->


<!-- ===== Document tabs ===== -->
<div class="a" style="left:144.3px;top:96.8px;width:59.7px;height:12.9px;background:#dadadc"></div><div class="a" style="left:19px;top:109.7px;width:560px;height:1.2px;background:#f7f7f7"></div>
<svg class="a" style="left:22px;top:99px" width="9" height="9" viewBox="0 0 9 9"><path d="M0.5 8.5 L8 1" stroke="#666" stroke-width="0.8"/><path d="M3.5 8.5 L8.5 0.5" stroke="#e0a030" stroke-width="1"/><path d="M0.5 5 L4 2" stroke="#aaa" stroke-width="0.6"/></svg>
<div class="t" style="left:34.3px;top:99.9px;font-size:7.6px;color:#333;letter-spacing:-0.2px">3D view</div>
<svg class="a" style="left:77px;top:98.5px" width="10" height="10" viewBox="0 0 10 10"><rect x="0.5" y="0.5" width="7" height="9" fill="#f4f4f4" stroke="#bbb" stroke-width="0.6"/><rect x="2" y="3" width="5" height="3" fill="#e0702a"/><rect x="7" y="3.5" width="2.5" height="2" fill="#333"/></svg>
<div class="t" style="left:89.4px;top:99.9px;font-size:7.6px;color:#333;letter-spacing:-0.27px">General data</div>
<svg class="a" style="left:148px;top:99px" width="9" height="9" viewBox="0 0 9 9"><path d="M0.5 8.5 L8 1" stroke="#666" stroke-width="0.8"/><path d="M3.5 8.5 L8.5 0.5" stroke="#e0a030" stroke-width="1"/><path d="M0.5 5 L4 2" stroke="#aaa" stroke-width="0.6"/></svg>
<div class="t" style="left:159.8px;top:99.9px;font-size:7.6px;color:#444;letter-spacing:-0.2px">2D editor</div>
<svg class="a" style="left:195.2px;top:100.3px" width="6" height="6" viewBox="0 0 6 6"><path d="M0.4 0.4 L5.6 5.6 M5.6 0.4 L0.4 5.6" stroke="#6a6a6a" stroke-width="0.8"/></svg>

<!-- canvas svg -->
<svg class="a" style="left:19px;top:110px" width="561" height="349" viewBox="19 110 561 349">
<defs><linearGradient id="rt" x1="0" y1="0" x2="0" y2="1"><stop offset="0" stop-color="#d5ebfc"/><stop offset="1" stop-color="#eef7ff"/></linearGradient>
<linearGradient id="rl" x1="0" y1="0" x2="1" y2="0"><stop offset="0" stop-color="#d6ebfc"/><stop offset="0.1" stop-color="#d9edfc"/><stop offset="1" stop-color="#eef7fe"/></linearGradient></defs>
<rect x="19" y="110.5" width="560" height="1" fill="#d6d6d6"/>
<rect x="19" y="111" width="560" height="15" fill="url(#rt)"/>
<rect x="19" y="126" width="14.5" height="332" fill="url(#rl)"/>
<rect x="33.5" y="126" width="545.5" height="332" fill="#fff"/>
<rect x="19.5" y="111" width="14.5" height="15" fill="#e6e6e6"/>
<path d="M22.5 112.8 L31 112.8" stroke="#444" stroke-width="1.4" stroke-dasharray="1.2 0.6"/><path d="M22.9 112 L22.9 116" stroke="#444" stroke-width="1"/><path d="M21.3 116 L24.5 116 L22.9 118 Z" fill="#444"/>
<text x="26.5" y="124.2" font-size="5.6" text-anchor="middle" fill="#4a5570" font-family="Liberation Sans">28</text>
<rect x="37.94" y="123.2" width="1" height="2.6" fill="#555"/>
<rect x="45.78" y="123.2" width="1" height="2.6" fill="#555"/>
<rect x="53.61" y="121" width="1" height="4.8" fill="#555"/>
<rect x="61.45" y="123.2" width="1" height="2.6" fill="#555"/>
<rect x="69.29" y="123.2" width="1" height="2.6" fill="#555"/>
<rect x="77.13" y="123.2" width="1" height="2.6" fill="#555"/>
<rect x="84.96" y="123.2" width="1" height="2.6" fill="#555"/>
<rect x="92.80" y="119" width="1" height="6.8" fill="#555"/>
<text x="93.30" y="117.9" font-size="6.3" text-anchor="middle" fill="#333" font-family="Liberation Sans">30</text>
<rect x="100.64" y="123.2" width="1" height="2.6" fill="#555"/>
<rect x="108.47" y="123.2" width="1" height="2.6" fill="#555"/>
<rect x="116.31" y="123.2" width="1" height="2.6" fill="#555"/>
<rect x="124.15" y="123.2" width="1" height="2.6" fill="#555"/>
<rect x="131.99" y="121" width="1" height="4.8" fill="#555"/>
<rect x="139.82" y="123.2" width="1" height="2.6" fill="#555"/>
<rect x="147.66" y="123.2" width="1" height="2.6" fill="#555"/>
<rect x="155.50" y="123.2" width="1" height="2.6" fill="#555"/>
<rect x="163.33" y="123.2" width="1" height="2.6" fill="#555"/>
<rect x="171.17" y="119" width="1" height="6.8" fill="#555"/>
<text x="171.67" y="117.9" font-size="6.3" text-anchor="middle" fill="#333" font-family="Liberation Sans">31</text>
<rect x="179.01" y="123.2" width="1" height="2.6" fill="#555"/>
<rect x="186.84" y="123.2" width="1" height="2.6" fill="#555"/>
<rect x="194.68" y="123.2" width="1" height="2.6" fill="#555"/>
<rect x="202.52" y="123.2" width="1" height="2.6" fill="#555"/>
<rect x="210.36" y="121" width="1" height="4.8" fill="#555"/>
<rect x="218.19" y="123.2" width="1" height="2.6" fill="#555"/>
<rect x="226.03" y="123.2" width="1" height="2.6" fill="#555"/>
<rect x="233.87" y="123.2" width="1" height="2.6" fill="#555"/>
<rect x="241.70" y="123.2" width="1" height="2.6" fill="#555"/>
<rect x="249.54" y="119" width="1" height="6.8" fill="#555"/>
<text x="250.04" y="117.9" font-size="6.3" text-anchor="middle" fill="#333" font-family="Liberation Sans">32</text>
<rect x="257.38" y="123.2" width="1" height="2.6" fill="#555"/>
<rect x="265.21" y="123.2" width="1" height="2.6" fill="#555"/>
<rect x="273.05" y="123.2" width="1" height="2.6" fill="#555"/>
<rect x="280.89" y="123.2" width="1" height="2.6" fill="#555"/>
<rect x="288.73" y="121" width="1" height="4.8" fill="#555"/>
<rect x="296.56" y="123.2" width="1" height="2.6" fill="#555"/>
<rect x="304.40" y="123.2" width="1" height="2.6" fill="#555"/>
<rect x="312.24" y="123.2" width="1" height="2.6" fill="#555"/>
<rect x="320.07" y="123.2" width="1" height="2.6" fill="#555"/>
<rect x="327.91" y="119" width="1" height="6.8" fill="#555"/>
<text x="328.41" y="117.9" font-size="6.3" text-anchor="middle" fill="#333" font-family="Liberation Sans">33</text>
<rect x="335.75" y="123.2" width="1" height="2.6" fill="#555"/>
<rect x="343.58" y="123.2" width="1" height="2.6" fill="#555"/>
<rect x="351.42" y="123.2" width="1" height="2.6" fill="#555"/>
<rect x="359.26" y="123.2" width="1" height="2.6" fill="#555"/>
<rect x="367.10" y="121" width="1" height="4.8" fill="#555"/>
<rect x="374.93" y="123.2" width="1" height="2.6" fill="#555"/>
<rect x="382.77" y="123.2" width="1" height="2.6" fill="#555"/>
<rect x="390.61" y="123.2" width="1" height="2.6" fill="#555"/>
<rect x="398.44" y="123.2" width="1" height="2.6" fill="#555"/>
<rect x="406.28" y="119" width="1" height="6.8" fill="#555"/>
<text x="406.78" y="117.9" font-size="6.3" text-anchor="middle" fill="#333" font-family="Liberation Sans">34</text>
<rect x="414.12" y="123.2" width="1" height="2.6" fill="#555"/>
<rect x="421.95" y="123.2" width="1" height="2.6" fill="#555"/>
<rect x="429.79" y="123.2" width="1" height="2.6" fill="#555"/>
<rect x="437.63" y="123.2" width="1" height="2.6" fill="#555"/>
<rect x="445.47" y="121" width="1" height="4.8" fill="#555"/>
<rect x="453.30" y="123.2" width="1" height="2.6" fill="#555"/>
<rect x="461.14" y="123.2" width="1" height="2.6" fill="#555"/>
<rect x="468.98" y="123.2" width="1" height="2.6" fill="#555"/>
<rect x="476.81" y="123.2" width="1" height="2.6" fill="#555"/>
<rect x="484.65" y="119" width="1" height="6.8" fill="#555"/>
<text x="485.15" y="117.9" font-size="6.3" text-anchor="middle" fill="#333" font-family="Liberation Sans">35</text>
<rect x="492.49" y="123.2" width="1" height="2.6" fill="#555"/>
<rect x="500.32" y="123.2" width="1" height="2.6" fill="#555"/>
<rect x="508.16" y="123.2" width="1" height="2.6" fill="#555"/>
<rect x="516.00" y="123.2" width="1" height="2.6" fill="#555"/>
<rect x="523.84" y="121" width="1" height="4.8" fill="#555"/>
<rect x="531.67" y="123.2" width="1" height="2.6" fill="#555"/>
<rect x="539.51" y="123.2" width="1" height="2.6" fill="#555"/>
<rect x="547.35" y="123.2" width="1" height="2.6" fill="#555"/>
<rect x="555.18" y="123.2" width="1" height="2.6" fill="#555"/>
<rect x="563.02" y="119" width="1" height="6.8" fill="#555"/>
<text x="563.52" y="117.9" font-size="6.3" text-anchor="middle" fill="#333" font-family="Liberation Sans">36</text>
<rect x="570.86" y="123.2" width="1" height="2.6" fill="#555"/>
<rect x="29.3" y="129.15" width="4.7" height="1" fill="#555"/>
<rect x="31.5" y="137.00" width="2.5" height="1" fill="#555"/>
<rect x="31.5" y="144.85" width="2.5" height="1" fill="#555"/>
<rect x="31.5" y="152.70" width="2.5" height="1" fill="#555"/>
<rect x="31.5" y="160.55" width="2.5" height="1" fill="#555"/>
<rect x="27" y="168.40" width="7" height="1" fill="#555"/>
<text x="0" y="0" font-size="6.3" text-anchor="middle" fill="#333" font-family="Liberation Sans" transform="translate(25.6 168.90) rotate(-90)">-1</text>
<rect x="31.5" y="176.25" width="2.5" height="1" fill="#555"/>
<rect x="31.5" y="184.10" width="2.5" height="1" fill="#555"/>
<rect x="31.5" y="191.95" width="2.5" height="1" fill="#555"/>
<rect x="31.5" y="199.80" width="2.5" height="1" fill="#555"/>
<rect x="29.3" y="207.65" width="4.7" height="1" fill="#555"/>
<rect x="31.5" y="215.50" width="2.5" height="1" fill="#555"/>
<rect x="31.5" y="223.35" width="2.5" height="1" fill="#555"/>
<rect x="31.5" y="231.20" width="2.5" height="1" fill="#555"/>
<rect x="31.5" y="239.05" width="2.5" height="1" fill="#555"/>
<rect x="27" y="246.90" width="7" height="1" fill="#555"/>
<text x="0" y="0" font-size="6.3" text-anchor="middle" fill="#333" font-family="Liberation Sans" transform="translate(25.6 247.40) rotate(-90)">-2</text>
<rect x="31.5" y="254.75" width="2.5" height="1" fill="#555"/>
<rect x="31.5" y="262.60" width="2.5" height="1" fill="#555"/>
<rect x="31.5" y="270.45" width="2.5" height="1" fill="#555"/>
<rect x="31.5" y="278.30" width="2.5" height="1" fill="#555"/>
<rect x="29.3" y="286.15" width="4.7" height="1" fill="#555"/>
<rect x="31.5" y="294.00" width="2.5" height="1" fill="#555"/>
<rect x="31.5" y="301.85" width="2.5" height="1" fill="#555"/>
<rect x="31.5" y="309.70" width="2.5" height="1" fill="#555"/>
<rect x="31.5" y="317.55" width="2.5" height="1" fill="#555"/>
<rect x="27" y="325.40" width="7" height="1" fill="#555"/>
<text x="0" y="0" font-size="6.3" text-anchor="middle" fill="#333" font-family="Liberation Sans" transform="translate(25.6 325.90) rotate(-90)">-3</text>
<rect x="31.5" y="333.25" width="2.5" height="1" fill="#555"/>
<rect x="31.5" y="341.10" width="2.5" height="1" fill="#555"/>
<rect x="31.5" y="348.95" width="2.5" height="1" fill="#555"/>
<rect x="31.5" y="356.80" width="2.5" height="1" fill="#555"/>
<rect x="29.3" y="364.65" width="4.7" height="1" fill="#555"/>
<rect x="31.5" y="372.50" width="2.5" height="1" fill="#555"/>
<rect x="31.5" y="380.35" width="2.5" height="1" fill="#555"/>
<rect x="31.5" y="388.20" width="2.5" height="1" fill="#555"/>
<rect x="31.5" y="396.05" width="2.5" height="1" fill="#555"/>
<rect x="27" y="403.90" width="7" height="1" fill="#555"/>
<text x="0" y="0" font-size="6.3" text-anchor="middle" fill="#333" font-family="Liberation Sans" transform="translate(25.6 404.40) rotate(-90)">-4</text>
<rect x="31.5" y="411.75" width="2.5" height="1" fill="#555"/>
<rect x="31.5" y="419.60" width="2.5" height="1" fill="#555"/>
<rect x="31.5" y="427.45" width="2.5" height="1" fill="#555"/>
<rect x="31.5" y="435.30" width="2.5" height="1" fill="#555"/>
<rect x="29.3" y="443.15" width="4.7" height="1" fill="#555"/>
<rect x="31.5" y="451.00" width="2.5" height="1" fill="#555"/>
<rect x="572.8" y="111" width="1" height="15" fill="#e8a070"/>
<rect x="19" y="274.8" width="15" height="1" fill="#e8a070"/>
<path d="M328.5 126 L328.5 341.5" stroke="#5e5e5e" stroke-width="1"/>
<path d="M31.5 341.5 L524 341.5 M29 364.5 L524 364.5" stroke="#5e5e5e" stroke-width="1"/>
<rect x="446" y="126" width="39.5" height="332" fill="#fffcc0" fill-opacity="0.92"/>
<path d="M445.9 126 L445.9 458" stroke="#a3a3a3" stroke-width="1.5"/><path d="M485.6 126 L485.6 458" stroke="#727272" stroke-width="1.2"/>
<path d="M36 262.9 L462 262.9" stroke="#c4dcc4" stroke-width="1.9"/>
<path d="M455 262.7 Q465.5 262.7 465.5 270" fill="none" stroke="#43a843" stroke-width="1"/>
<path d="M465.5 126 L465.5 396.2 L387 396.2" fill="none" stroke="#62b85a" stroke-width="1.1"/>
<circle cx="37.6" cy="262.7" r="1.7" fill="#0a800a"/>
<path d="M55.1 262.7 L58.1 261.0 L58.1 264.4 Z" fill="#0a800a"/>
<path d="M124.0 262.7 L127.0 261.0 L127.0 264.4 Z" fill="#0a800a"/>
<path d="M194.1 262.7 L197.1 261.0 L197.1 264.4 Z" fill="#0a800a"/>
<path d="M242.1 262.7 L245.1 261.0 L245.1 264.4 Z" fill="#0a800a"/>
<path d="M308.4 262.7 L311.4 261.0 L311.4 264.4 Z" fill="#0a800a"/>
<circle cx="171.3" cy="262.9" r="1.85" fill="#0a800a"/>
<circle cx="219.3" cy="262.9" r="1.85" fill="#0a800a"/>
<circle cx="416.4" cy="262.9" r="1.85" fill="#0a800a"/>
<circle cx="392.4" cy="262.7" r="1.0" fill="#0a800a"/>
<circle cx="441.3" cy="262.7" r="1.0" fill="#0a800a"/>
<circle cx="347.5" cy="262.7" r="1.7" fill="#0a800a"/>
<circle cx="367.5" cy="262.9" r="1.7" fill="#0a800a"/>
<circle cx="465.5" cy="262.7" r="1.8" fill="#0a800a"/>
<circle cx="465.5" cy="271" r="1.8" fill="#0a800a"/>
<path d="M452 264 L458 264" stroke="#0a800a" stroke-width="1.3"/>
<path d="M76.7 262.7 L90.7 242.2" stroke="#333" stroke-width="0.8"/>
<text x="91.7" y="244.3" font-size="6.5" font-style="italic" fill="#bdbdbd" font-family="Liberation Sans">20 x 1,9</text>
<path d="M106.1 262.7 L120.1 242.2" stroke="#333" stroke-width="0.8"/>
<text x="122" y="244.3" font-size="6.5" font-style="italic" fill="#bdbdbd" font-family="Liberation Sans">20 x 1,9</text>
<path d="M195.7 262.7 L209.7 242.2" stroke="#333" stroke-width="0.8"/>
<text x="211.7" y="244.3" font-size="6.5" font-style="italic" fill="#bdbdbd" font-family="Liberation Sans">20 x 1,9</text>
<path d="M253.3 262.7 L267.3 242.2" stroke="#333" stroke-width="0.8"/>
<text x="270" y="244.3" font-size="6.5" font-style="italic" fill="#bdbdbd" font-family="Liberation Sans">20 x 1,9</text>
<path d="M300 262.7 L314 242.2" stroke="#333" stroke-width="0.8"/>
<text x="316" y="244.3" font-size="6.5" font-style="italic" fill="#bdbdbd" font-family="Liberation Sans">20 x 1,9</text>
<path d="M357 262.7 L371 242.2" stroke="#333" stroke-width="0.8"/>
<text x="374" y="244.3" font-size="6.5" font-style="italic" fill="#bdbdbd" font-family="Liberation Sans">20 x 1,9</text>
<path d="M392.4 262.7 L406.4 242.2" stroke="#333" stroke-width="0.8"/>
<text x="408" y="244.3" font-size="6.5" font-style="italic" fill="#bdbdbd" font-family="Liberation Sans">20 x 1,9</text>
<path d="M441.3 262.7 L455.3 242.2" stroke="#333" stroke-width="0.8"/>
<text x="457" y="244.3" font-size="6.5" font-style="italic" fill="#bdbdbd" font-family="Liberation Sans">20 x 1,9</text>
<text x="35" y="244.3" font-size="6.5" font-style="italic" fill="#bdbdbd" font-family="Liberation Sans">20 x 1,9</text>
<path d="M466 268 L479.6 247" stroke="#333" stroke-width="0.8"/>
<text x="482" y="247.3" font-size="6.5" font-style="italic" fill="#bdbdbd" font-family="Liberation Sans">40 x 3,7</text>
<path d="M465.5 139.8 L463.8 142.8 L467.2 142.8 Z" fill="#0a800a"/>
<path d="M465.5 141.7 L477.2 124.99999999999999" stroke="#333" stroke-width="0.8"/>
<path d="M465.5 332 L463.8 335 L467.2 335 Z" fill="#0a800a"/>
<path d="M465.5 334 L480.0 313" stroke="#333" stroke-width="0.8"/>
<text x="482" y="314.5" font-size="6.5" font-style="italic" fill="#bdbdbd" font-family="Liberation Sans">40 x 3,7</text>
<circle cx="465.7" cy="396.2" r="1.8" fill="#0a800a"/>
<circle cx="416.2" cy="396.2" r="1.1" fill="#0a800a"/>
<path d="M416.2 396.2 L430.2 376.0" stroke="#333" stroke-width="0.8"/>
<text x="432" y="378.3" font-size="6.5" font-style="italic" fill="#bdbdbd" font-family="Liberation Sans">40 x 3,7</text>
<path d="M70.5 278 L72 270.5 Q76 269 79 270 L79 273.5 L82.5 273.8 L82.5 276 L79 276 L79 278 Z" fill="#f3e66c" stroke="#b9ac3a" stroke-width="0.3"/>
<path d="M76 270 Q78 268.5 80 269.5" fill="none" stroke="#333" stroke-width="0.8"/>
<path d="M59.4 278.2 L87.5 278.2 Q88 286 84 288.5 Q81 290.5 73.5 290.5 Q66 290.5 63 288.5 Q59 286 59.4 278.2 Z" fill="#fff" stroke="#555" stroke-width="0.9"/>
<path d="M75.5 262.7 L75.5 300.5 M79.3 262.7 L79.3 300.5" stroke="#43a843" stroke-width="0.9"/>
<circle cx="75.5" cy="262.7" r="1.5" fill="#fff" stroke="#43a843" stroke-width="0.8"/>
<circle cx="79.3" cy="262.7" r="1.5" fill="#fff" stroke="#43a843" stroke-width="0.8"/>
<circle cx="75.5" cy="299.8" r="1.5" fill="#fff" stroke="#43a843" stroke-width="0.8"/>
<circle cx="79.3" cy="299.8" r="1.5" fill="#fff" stroke="#43a843" stroke-width="0.8"/>
<circle cx="77.5" cy="301.5" r="1.5" fill="#0a800a"/>
<path d="M75.5 279.5 L74 282 L77 282 Z M79.3 282.5 L77.8 280 L80.8 280 Z" fill="#0a800a"/>
<rect x="253.7" y="274.1" width="32" height="31.4" rx="2.2" fill="#fffa84" stroke="#555" stroke-width="0.9"/>
<rect x="261.1" y="277" width="16.8" height="5.5" rx="0.5" fill="none" stroke="#333" stroke-width="0.8"/>
<rect x="256" y="305.8" width="28" height="3.5" fill="#bdbdbd"/>
<path d="M255.5 311 Q255 308.5 260 308.5 L280 308.5 Q285 308.5 284.5 311 Q284 320 276 325 Q277 331 270 332 Q263 331 264 325 Q256 320 255.5 311 Z" fill="#fff" stroke="#555" stroke-width="0.9"/>
<path d="M257 313 L283 313" stroke="#aaa" stroke-width="0.6"/>
<path d="M267.5 262.7 L267.5 282 M271.6 262.7 L271.6 282" stroke="#43a843" stroke-width="0.9"/>
<circle cx="267.5" cy="262.7" r="1.5" fill="#fff" stroke="#43a843" stroke-width="0.8"/>
<circle cx="271.6" cy="262.7" r="1.5" fill="#fff" stroke="#43a843" stroke-width="0.8"/>
<circle cx="269.5" cy="282.3" r="1.6" fill="#0a800a"/>
<path d="M267.5 266 L266 268.5 L269 268.5 Z M271.6 270 L270.1 267.5 L273.1 267.5 Z" fill="#0a800a"/>
<path d="M347.5 258.8 L364 266.6 L364 258.8 L347.5 266.6 Z" fill="#fff" stroke="#333" stroke-width="0.8"/>
<path d="M356 262.7 Q357 257 362 258 Q365 259 367 262.7" fill="none" stroke="#43a843" stroke-width="0.9"/>
<path d="M354 257 L358 257" stroke="#0a800a" stroke-width="1.4"/>
<circle cx="347.5" cy="262.7" r="1.7" fill="#0a800a"/>
<filter id="bl" x="-20%" y="-20%" width="140%" height="140%"><feGaussianBlur stdDeviation="0.9"/></filter>
<rect x="351.6" y="380.4" width="32" height="31.8" fill="none" stroke="#ffe36a" stroke-width="5.6" filter="url(#bl)"/>
<path d="M367.5 396.2 L371 396.2" stroke="#62b85a" stroke-width="1"/>
<path d="M371.3 391.8 L381 396.2 L371.3 400.6 Z" fill="#fff" stroke="#222" stroke-width="0.85"/>
<path d="M381 396.2 L386.8 389.6 L386.8 400.6 Z" fill="#fff" stroke="#222" stroke-width="0.85"/>
<path d="M379.3 387.4 L386.6 392.2" stroke="#333" stroke-width="0.75"/>
<path d="M367.5 395.6 L359 379.45 A9.6 9.6 0 1 1 376 379.45 Z" fill="#cfe5f7" fill-opacity="0.7" stroke="#1a1a1a" stroke-width="1.15"/>
<circle cx="367.5" cy="375" r="4.9" fill="#fff" stroke="#1a1a1a" stroke-width="1.2"/>
<circle cx="367.5" cy="375" r="2.3" fill="#cfe5f7" stroke="#1a1a1a" stroke-width="1.1"/>
<path d="M371.5 389.8 L381 396.2 L371.5 402.3 Z" fill="#fff" stroke="#333" stroke-width="0.8"/>
<path d="M381 396.2 L386.5 390 L386.5 402.3 Z" fill="#fff" stroke="#333" stroke-width="0.8"/>
<path d="M379.5 387.5 L386 391" stroke="#444" stroke-width="0.7"/>
</svg>

<!-- bottom toolbar -->
<div class="a" style="left:19px;top:457.6px;width:560px;height:13.5px;background:#f0f0f0"></div>
<div class="a" style="left:19.3px;top:457.6px;width:94.5px;height:13.5px;background:#e6e6e6;border:1px solid #d6d6d6"></div>
<div class="a" style="left:30.5px;top:458.5px;width:1px;height:12px;background:#cfcfcf"></div>
<div class="a" style="left:40.5px;top:458.5px;width:1px;height:12px;background:#cfcfcf"></div>
<svg class="a" style="left:21px;top:459.5px" width="6" height="9" viewBox="0 0 6 9"><path d="M3 0.3 L5.8 3.5 L4 3.5 L4 8.7 L2 8.7 L2 3.5 L0.2 3.5 Z" fill="#2a8ae0"/></svg>
<svg class="a" style="left:32.5px;top:459.5px" width="6" height="9" viewBox="0 0 6 9"><path d="M3 8.7 L5.8 5.5 L4 5.5 L4 0.3 L2 0.3 L2 5.5 L0.2 5.5 Z" fill="#2a7ad0"/></svg>
<svg class="a" style="left:44.5px;top:459.5px" width="10" height="9" viewBox="0 0 10 9"><rect x="0.5" y="0.5" width="3" height="2.5" fill="none" stroke="#999" stroke-width="0.6"/><rect x="6.5" y="0.5" width="3" height="2.5" fill="none" stroke="#999" stroke-width="0.6"/><rect x="0.5" y="6" width="3" height="2.5" fill="none" stroke="#999" stroke-width="0.6"/><path d="M2 3 L2 6 M3.5 1.7 L6.5 1.7 M8 3 L8 8.5 L3.5 7.5" stroke="#999" stroke-width="0.6" fill="none"/></svg>
<div class="t" style="left:56.6px;top:461.1px;font-size:7.3px;color:#333;letter-spacing:-0.1px">A (Cold water)</div>
<svg class="a" style="left:106.5px;top:463px" width="5" height="3" viewBox="0 0 5 3"><path d="M0.5 0.5 L2.5 2.5 L4.5 0.5" fill="none" stroke="#444" stroke-width="0.9"/></svg>

<!-- status bar -->
<div class="a" style="left:19px;top:471px;width:560px;height:13.7px;background:#0077d0"></div>
<svg class="a" style="left:28.5px;top:474px" width="8" height="8" viewBox="0 0 8 8"><path d="M1.5 0.5 L7.5 0.5 L6.5 7.5 L0.5 7.5 Z" fill="#e8eef5" stroke="#c7d3e0" stroke-width="0.5"/><path d="M2.5 2 L5.5 2 L5 6 L2 6 Z" fill="none" stroke="#9bb" stroke-width="0.4"/></svg>
<div class="a" style="left:44.8px;top:476.2px;width:7.5px;height:3px;background:#e6e0f5"></div>
<svg class="a" style="left:61.5px;top:474px" width="6" height="8" viewBox="0 0 6 8"><path d="M1 0.5 L1 7.5 M1 0.7 L5 1.5 L3 4 L1 4" fill="#cfc7a6" stroke="#cfc7a6" stroke-width="1"/></svg>
<div class="t" style="left:84.6px;top:473.9px;font-size:7.5px;color:#fff;letter-spacing:-0.42px">36,123; -2,361</div>

<!-- diagnostics -->
<svg class="a" style="left:20px;top:490.5px" width="9" height="10" viewBox="0 0 9 10"><rect x="0.5" y="0.5" width="6" height="9" fill="#fafafa" stroke="#888" stroke-width="0.6"/><rect x="2" y="0" width="3" height="1.2" fill="#777"/><circle cx="6" cy="7.3" r="2.3" fill="#e02424"/></svg>
<div class="t" style="left:30.7px;top:491.6px;font-size:7.5px;color:#3a3a3a;letter-spacing:-0.22px">Diagnostics</div>
<svg class="a" style="left:67.5px;top:492.5px" width="4" height="7" viewBox="0 0 4 7"><path d="M1 0.6 L3 0.6 L3 4.3 L1 4.3 Z" fill="none" stroke="#333" stroke-width="0.9"/><path d="M0.3 4.6 L3.7 4.6 M2 4.6 L2 6.8" stroke="#333" stroke-width="0.8"/></svg>
<svg class="a" style="left:73.5px;top:493px" width="6" height="6" viewBox="0 0 6 6"><path d="M0.5 0.5 L5.5 5.5 M5.5 0.5 L0.5 5.5" stroke="#444" stroke-width="0.9"/></svg>
<div class="a" style="left:19px;top:500.6px;width:61px;height:3.9px;background:#c8c9cc"></div>

<!-- project browser sidebar -->
<div class="a" style="left:0;top:96px;width:3.5px;height:73.6px;background:#c6c6c6"></div>
<svg class="a" style="left:5px;top:97px" width="9" height="8" viewBox="0 0 9 8"><rect x="0" y="0" width="9" height="1.4" fill="#2e7fd8"/><path d="M1 1.5 L1 8 M3.3 1.5 L3.3 8 M5.6 1.5 L5.6 8 M7.9 1.5 L7.9 8" stroke="#aaa" stroke-width="0.6"/></svg>
<div class="t" style="left:14.7px;top:107.3px;font-size:7.7px;color:#555;letter-spacing:-0.1px;transform:rotate(90deg);transform-origin:0 0">Project browser</div>
<svg class="a" style="left:6.5px;top:160.5px" width="7" height="4" viewBox="0 0 7 4"><path d="M0.6 1 L4.3 1 L4.3 3 L0.6 3 Z" fill="none" stroke="#333" stroke-width="0.9"/><path d="M4.6 0.3 L4.6 3.7 M4.6 2 L6.8 2" stroke="#333" stroke-width="0.8"/></svg>
<svg class="a" style="left:6.5px;top:165.5px" width="6" height="6" viewBox="0 0 6 6"><path d="M0.5 0.5 L5.5 5.5 M5.5 0.5 L0.5 5.5" stroke="#444" stroke-width="0.9"/></svg>

<!-- data table sidebar -->
<div class="a" style="left:896.4px;top:97px;width:3.6px;height:63px;background:#c6c6c6"></div>
<svg class="a" style="left:887px;top:96.5px" width="10" height="9" viewBox="0 0 10 9"><rect x="1" y="0.5" width="8" height="1" fill="#888"/><rect x="3" y="2" width="6.5" height="3" fill="#e04848"/><path d="M1 2 L6.5 8" stroke="#f2b418" stroke-width="1.8"/></svg>
<div class="a" style="left:887.5px;top:108.5px;width:3px;height:3px;border-radius:50%;background:#333"></div>
<div class="t" style="left:895.2px;top:113.8px;font-size:7.8px;color:#555;letter-spacing:-0.1px;transform:rotate(90deg);transform-origin:0 0">Data table</div>
<svg class="a" style="left:886.5px;top:149.5px" width="7" height="4" viewBox="0 0 7 4"><path d="M0.6 1 L4.3 1 L4.3 3 L0.6 3 Z" fill="none" stroke="#333" stroke-width="0.9"/><path d="M4.6 0.3 L4.6 3.7 M4.6 2 L6.8 2" stroke="#333" stroke-width="0.8"/></svg>
<svg class="a" style="left:886px;top:155.5px" width="6" height="6" viewBox="0 0 6 6"><path d="M0.5 0.5 L5.5 5.5 M5.5 0.5 L0.5 5.5" stroke="#444" stroke-width="0.9"/></svg>
<!-- bottom black line -->
<div class="a" style="left:0;top:504.4px;width:900px;height:1.6px;background:#1e1e1e"></div>


<!-- ===== Right properties panel ===== -->
<div class="a" style="left:582px;top:96px;width:300px;height:390px;background:#f0f0f0;border:1px solid #dedede"></div>
<div class="a" style="left:583px;top:114px;width:298px;height:1.3px;background:#dcdcdc"></div>
<svg class="a" style="left:585.8px;top:104.2px" width="6" height="4" viewBox="0 0 6 4"><path d="M0.8 0.8 L3 3 L5.2 0.8" fill="none" stroke="#444" stroke-width="1.1"/></svg>
<div class="t" style="left:711px;top:100.3px;font-size:7px;color:#222">1* Starting point</div>
<!-- grid -->
<div class="a" style="left:583px;top:115px;width:288px;height:325px;background:#fff"></div>
<div class="a" style="left:583px;top:115px;width:8.5px;height:219px;background:#f0f0f0"></div>
<div class="a" style="left:871px;top:115px;width:10px;height:325px;background:#f8f8f8"></div>
<svg class="a" style="left:873px;top:118px" width="7" height="4" viewBox="0 0 7 4"><path d="M0.5 3.5 L3.5 0.6 L6.5 3.5" fill="none" stroke="#999" stroke-width="0.9"/></svg>
<svg class="a" style="left:873px;top:433px" width="7" height="4" viewBox="0 0 7 4"><path d="M0.5 0.5 L3.5 3.4 L6.5 0.5" fill="none" stroke="#999" stroke-width="0.9"/></svg>
<div class="a" style="left:583px;top:115.2px;width:288px;height:12.3px;background:#f0f0f0"></div>
<svg class="a" style="left:585px;top:120.32px" width="6" height="4" viewBox="0 0 6 4"><path d="M0.7 0.8 L3 3.1 L5.3 0.8" fill="none" stroke="#444" stroke-width="1.25"/></svg>
<div class="t" style="left:593px;top:117.11px;font-size:8.3px;color:#8f8f8f">Component identification</div>
<div class="a" style="left:591.5px;top:127.56px;width:150.3px;height:13.5px;background:#fff;border-bottom:1px solid #efefef"></div>
<div class="a" style="left:741.8px;top:127.56px;width:129.2px;height:13.5px;background:#e4eef9;border-bottom:1px solid #efefef;border-left:1px solid #efefef"></div>
<div class="t" style="left:593.1px;top:130.67px;font-size:7.5px;color:#2a2a2a;width:158.9px;overflow:hidden;transform:scaleX(0.925);transform-origin:0 0">Symbol</div>
<div class="t" style="left:743px;top:130.67px;font-size:7.5px;color:#4a55a8">A</div>
<svg class="a" style="left:855.5px;top:132.78px" width="6" height="4" viewBox="0 0 6 4"><path d="M0.8 0.9 L3 3 L5.2 0.9" fill="none" stroke="#333" stroke-width="1.15"/></svg>
<svg class="a" style="left:863.5px;top:130.88px" width="8" height="8" viewBox="0 0 8 8"><rect x="0.5" y="2.2" width="5.5" height="3.8" fill="#fff" stroke="#2b9be0" stroke-width="1"/><rect x="5" y="0" width="3" height="3" fill="#2b9be0"/><rect x="1" y="6.6" width="5" height="1" fill="#2b9be0"/></svg>
<div class="a" style="left:583px;top:141.13px;width:288px;height:12.8px;background:#f0f0f0"></div>
<svg class="a" style="left:585px;top:146.05px" width="6" height="4" viewBox="0 0 6 4"><path d="M0.7 0.8 L3 3.1 L5.3 0.8" fill="none" stroke="#444" stroke-width="1.25"/></svg>
<div class="t" style="left:593px;top:142.84px;font-size:8.3px;color:#8f8f8f">Technical data</div>
<div class="a" style="left:591.5px;top:153.99px;width:150.3px;height:13.5px;background:#fff;border-bottom:1px solid #efefef"></div>
<div class="a" style="left:741.8px;top:153.99px;width:129.2px;height:13.5px;background:#fff;border-bottom:1px solid #efefef;border-left:1px solid #efefef"></div>
<div class="t" style="left:593.1px;top:157.11px;font-size:7.5px;color:#2a2a2a;width:158.9px;overflow:hidden;transform:scaleX(0.925);transform-origin:0 0">Leading pipe-run</div>
<div class="t" style="left:743px;top:157.11px;font-size:7.5px;color:#2a2a2a;width:120.0px;overflow:hidden;transform:scaleX(0.925);transform-origin:0 0">Cold water</div>
<svg class="a" style="left:855.5px;top:159.32px" width="6" height="4" viewBox="0 0 6 4"><path d="M0.8 0.9 L3 3 L5.2 0.9" fill="none" stroke="#333" stroke-width="1.15"/></svg>
<div class="a" style="left:591.5px;top:167.56px;width:150.3px;height:14.1px;background:#cce8f9;border-bottom:1px solid #efefef"></div>
<div class="a" style="left:741.8px;top:167.56px;width:129.2px;height:14.1px;background:#fff;border-bottom:1px solid #efefef;border-left:1px solid #efefef"></div>
<div class="t" style="left:593.1px;top:170.98px;font-size:7.5px;color:#2a2a2a;width:158.9px;overflow:hidden;transform:scaleX(0.925);transform-origin:0 0">Separate schematic views</div>
<svg class="a" style="left:797.7px;top:170.37px" width="9" height="9" viewBox="0 0 9 9"><rect x="0.5" y="0.5" width="8" height="8" fill="#fff" stroke="#a8a8a8" stroke-width="0.8"/><path d="M2 4.6 L3.7 6.3 L7 2.6" fill="none" stroke="#2a2a2a" stroke-width="1.1"/></svg>
<div class="a" style="left:591.5px;top:181.73px;width:150.3px;height:14.1px;background:#fff;border-bottom:1px solid #efefef"></div>
<div class="a" style="left:741.8px;top:181.73px;width:129.2px;height:14.1px;background:#fff;border-bottom:1px solid #efefef;border-left:1px solid #efefef"></div>
<div class="t" style="left:593.1px;top:185.15px;font-size:7.5px;color:#2a2a2a;width:158.9px;overflow:hidden;transform:scaleX(0.925);transform-origin:0 0">Max. length of pipe-run to be hidden</div>
<div class="t" style="left:743px;top:185.15px;font-size:7.5px;color:#2a2a2a;width:120.0px;overflow:hidden;transform:scaleX(0.925);transform-origin:0 0">1,000</div>
<div class="t" style="left:856px;top:185.15px;font-size:7.5px;color:#666;transform:scaleX(0.925);transform-origin:0 0">m</div>
<div class="a" style="left:591.5px;top:195.90px;width:150.3px;height:13.7px;background:#fff;border-bottom:1px solid #efefef"></div>
<div class="a" style="left:741.8px;top:195.90px;width:129.2px;height:13.7px;background:#fff;border-bottom:1px solid #efefef;border-left:1px solid #efefef"></div>
<div class="t" style="left:593.1px;top:199.12px;font-size:7.5px;color:#2a2a2a;width:158.9px;overflow:hidden;transform:scaleX(0.925);transform-origin:0 0">Max. length of pipe-run to be hidden Riser-Tee</div>
<div class="t" style="left:743px;top:199.12px;font-size:7.5px;color:#2a2a2a;width:120.0px;overflow:hidden;transform:scaleX(0.925);transform-origin:0 0">1,000</div>
<div class="t" style="left:856px;top:199.12px;font-size:7.5px;color:#666;transform:scaleX(0.925);transform-origin:0 0">m</div>
<div class="a" style="left:591.5px;top:209.67px;width:150.3px;height:13.8px;background:#fff;border-bottom:1px solid #efefef"></div>
<div class="a" style="left:741.8px;top:209.67px;width:129.2px;height:13.8px;background:#fff;border-bottom:1px solid #efefef;border-left:1px solid #efefef"></div>
<div class="t" style="left:593.1px;top:212.99px;font-size:7.5px;color:#2a2a2a;width:158.9px;overflow:hidden;transform:scaleX(0.925);transform-origin:0 0">Riser determines direction of schematic view</div>
<svg class="a" style="left:797.7px;top:212.28px" width="9" height="9" viewBox="0 0 9 9"><rect x="0.5" y="0.5" width="8" height="8" fill="#fff" stroke="#a8a8a8" stroke-width="0.8"/><path d="M2 4.6 L3.7 6.3 L7 2.6" fill="none" stroke="#2a2a2a" stroke-width="1.1"/></svg>
<div class="a" style="left:591.5px;top:223.54px;width:150.3px;height:13.9px;background:#fff;border-bottom:1px solid #efefef"></div>
<div class="a" style="left:741.8px;top:223.54px;width:129.2px;height:13.9px;background:#fff;border-bottom:1px solid #efefef;border-left:1px solid #efefef"></div>
<div class="t" style="left:593.1px;top:226.86px;font-size:7.5px;color:#2a2a2a;width:158.9px;overflow:hidden;transform:scaleX(0.925);transform-origin:0 0">Generate schematic view</div>
<svg class="a" style="left:797.7px;top:226.15px" width="9" height="9" viewBox="0 0 9 9"><rect x="0.5" y="0.5" width="8" height="8" fill="#fff" stroke="#a8a8a8" stroke-width="0.8"/><path d="M2 4.6 L3.7 6.3 L7 2.6" fill="none" stroke="#2a2a2a" stroke-width="1.1"/></svg>
<div class="a" style="left:583px;top:237.51px;width:288px;height:13.4px;background:#f0f0f0"></div>
<svg class="a" style="left:585px;top:242.74px" width="6" height="4" viewBox="0 0 6 4"><path d="M0.7 0.8 L3 3.1 L5.3 0.8" fill="none" stroke="#444" stroke-width="1.25"/></svg>
<div class="t" style="left:593px;top:239.52px;font-size:8.3px;color:#8f8f8f">2D/3D view style</div>
<div class="a" style="left:591.5px;top:250.98px;width:150.3px;height:13.7px;background:#fff;border-bottom:1px solid #efefef"></div>
<div class="a" style="left:741.8px;top:250.98px;width:129.2px;height:13.7px;background:#fff;border-bottom:1px solid #efefef;border-left:1px solid #efefef"></div>
<div class="t" style="left:593.1px;top:254.19px;font-size:7.5px;color:#2a2a2a;width:158.9px;overflow:hidden;transform:scaleX(0.925);transform-origin:0 0">Presented on schematic view</div>
<div class="t" style="left:743px;top:254.19px;font-size:7.5px;color:#2a2a2a;width:120.0px;overflow:hidden;transform:scaleX(0.925);transform-origin:0 0">Installation between source and rise</div>
<svg class="a" style="left:855.5px;top:256.41px" width="6" height="4" viewBox="0 0 6 4"><path d="M0.8 0.9 L3 3 L5.2 0.9" fill="none" stroke="#333" stroke-width="1.15"/></svg>
<div class="a" style="left:591.5px;top:264.75px;width:150.3px;height:14.2px;background:#fff;border-bottom:1px solid #efefef"></div>
<div class="a" style="left:741.8px;top:264.75px;width:129.2px;height:14.2px;background:#fff;border-bottom:1px solid #efefef;border-left:1px solid #efefef"></div>
<div class="t" style="left:593.1px;top:268.26px;font-size:7.5px;color:#2a2a2a;width:158.9px;overflow:hidden;transform:scaleX(0.925);transform-origin:0 0">Automatic labels</div>
<div class="t" style="left:743px;top:268.26px;font-size:7.5px;color:#2a2a2a;width:120.0px;overflow:hidden;transform:scaleX(0.925);transform-origin:0 0">Circulation pipe-run, Cold water pip</div>
<svg class="a" style="left:855.5px;top:270.38px" width="6" height="4" viewBox="0 0 6 4"><path d="M0.8 0.9 L3 3 L5.2 0.9" fill="none" stroke="#333" stroke-width="1.15"/></svg>
<div class="a" style="left:591.5px;top:279.02px;width:150.3px;height:14.1px;background:#fff;border-bottom:1px solid #efefef"></div>
<div class="a" style="left:741.8px;top:279.02px;width:129.2px;height:14.1px;background:#fff;border-bottom:1px solid #efefef;border-left:1px solid #efefef"></div>
<div class="t" style="left:593.1px;top:282.44px;font-size:7.5px;color:#2a2a2a;width:158.9px;overflow:hidden;transform:scaleX(0.925);transform-origin:0 0">Show room extent</div>
<svg class="a" style="left:797.7px;top:281.83px" width="9" height="9" viewBox="0 0 9 9"><rect x="0.5" y="0.5" width="8" height="8" fill="#fff" stroke="#a8a8a8" stroke-width="0.8"/><path d="M2 4.6 L3.7 6.3 L7 2.6" fill="none" stroke="#2a2a2a" stroke-width="1.1"/></svg>
<div class="a" style="left:591.5px;top:293.19px;width:150.3px;height:13.6px;background:#fff;border-bottom:1px solid #efefef"></div>
<div class="a" style="left:741.8px;top:293.19px;width:129.2px;height:13.6px;background:#fff;border-bottom:1px solid #efefef;border-left:1px solid #efefef"></div>
<div class="t" style="left:593.1px;top:296.41px;font-size:7.5px;color:#2a2a2a;width:158.9px;overflow:hidden;transform:scaleX(0.925);transform-origin:0 0">Apparent shift - HW</div>
<div class="t" style="left:743px;top:296.41px;font-size:7.5px;color:#2a2a2a;width:120.0px;overflow:hidden;transform:scaleX(0.925);transform-origin:0 0">-0,050</div>
<div class="t" style="left:856px;top:296.41px;font-size:7.5px;color:#666;transform:scaleX(0.925);transform-origin:0 0">m</div>
<div class="a" style="left:591.5px;top:306.86px;width:150.3px;height:14.2px;background:#fff;border-bottom:1px solid #efefef"></div>
<div class="a" style="left:741.8px;top:306.86px;width:129.2px;height:14.2px;background:#fff;border-bottom:1px solid #efefef;border-left:1px solid #efefef"></div>
<div class="t" style="left:593.1px;top:310.38px;font-size:7.5px;color:#2a2a2a;width:158.9px;overflow:hidden;transform:scaleX(0.925);transform-origin:0 0">Apparent shift - CW</div>
<div class="t" style="left:743px;top:310.38px;font-size:7.5px;color:#2a2a2a;width:120.0px;overflow:hidden;transform:scaleX(0.925);transform-origin:0 0">0,000</div>
<div class="t" style="left:856px;top:310.38px;font-size:7.5px;color:#666;transform:scaleX(0.925);transform-origin:0 0">m</div>
<div class="a" style="left:591.5px;top:321.13px;width:150.3px;height:13.7px;background:#fff;border-bottom:1px solid #efefef"></div>
<div class="a" style="left:741.8px;top:321.13px;width:129.2px;height:13.7px;background:#fff;border-bottom:1px solid #efefef;border-left:1px solid #efefef"></div>
<div class="t" style="left:593.1px;top:324.35px;font-size:7.5px;color:#2a2a2a;width:158.9px;overflow:hidden;transform:scaleX(0.925);transform-origin:0 0">Apparent shift - Circ</div>
<div class="t" style="left:743px;top:324.35px;font-size:7.5px;color:#2a2a2a;width:120.0px;overflow:hidden;transform:scaleX(0.925);transform-origin:0 0">0,050</div>
<div class="t" style="left:856px;top:324.35px;font-size:7.5px;color:#666;transform:scaleX(0.925);transform-origin:0 0">m</div>
<!-- red highlight -->
<div class="a" style="left:590.5px;top:166.7px;width:280.6px;height:15.2px;border:1.8px solid #f20a0a;border-radius:4.5px"></div>
<!-- description -->
<div class="a" style="left:582.5px;top:440px;width:299px;height:46.3px;background:#f7f7f7;border:1px solid #dcdcdc"></div>
<div class="t" style="left:590px;top:449.2px;font-size:6.8px;font-weight:bold;color:#1e1e1e">Separate schematic views</div>
<div class="t" style="left:590px;top:462.2px;font-size:7.1px;color:#333;letter-spacing:-0.05px">Generate a separate sheet of schematic view for cold water and separate for hot water and</div>
<div class="t" style="left:590px;top:471.2px;font-size:7.1px;color:#333;letter-spacing:-0.05px">circulation</div>
</body></html>
